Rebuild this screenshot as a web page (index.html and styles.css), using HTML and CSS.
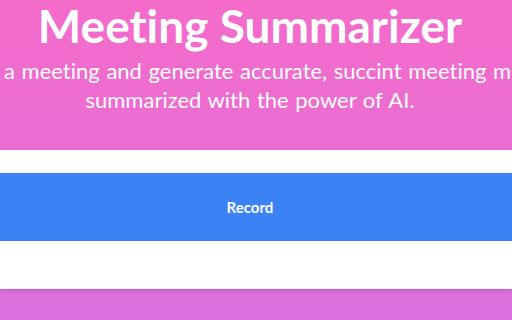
FILE: index.html
```html
<!DOCTYPE html>
<html lang="en">
<head>
  <meta charset="UTF-8" />
  <meta name="viewport" content="width=device-width, initial-scale=1.0"/>
  <title>Meeting Summarizer</title>
  <link rel="stylesheet" href="styles.css">
</head>
<body>

  <section class="hero">
    <div class="hero-content">
      <h1>Meeting Summarizer</h1>
      <p>Record a meeting and generate accurate, succint meeting minutes summarized with the power of AI.</p>
    </div>
  </section>

  <!-- Recorder card -->
  <section class="card">
    <button class="record-btn">Record</button>
    <div class="transcript"></div>
  </section>

</body>
</html>
```

FILE: styles.css
```css
* {
  margin: 0;
  padding: 0;
  box-sizing: border-box;
}

html, body {
  min-height: 100%;
  font-family: Lato, 'Open Sans', sans-serif;
  font-variant-ligatures: none;
}

body {
  background: linear-gradient(to bottom, #f56bca 0px, #dd70df 320px);
  min-height: 320px;
  overflow: hidden;
}

.hero {
  display: flex;
  justify-content: center;
  padding-right: 12px;
  height: 150px;
  color: white;
  text-align: center;
}

.hero-content {
  flex: none;
  width: 660px;
}

.hero h1 {
  font-size: 46px;
  font-weight: bold;
  line-height: 52px;
}

.hero p {
  margin-top: 4px;
  font-size: 22px;
  line-height: 29px;
  word-spacing: 1px;
}

.card {
  background: white;
  padding-top: 23px;
  box-shadow: 0 2px 4px rgba(0, 0, 0, 0.12);
}

.record-btn {
  display: block;
  width: 100%;
  height: 68px;
  padding-right: 12px;
  border: none;
  background-color: #3b82f6;
  color: white;
  font-family: inherit;
  font-size: 15px;
  font-weight: bold;
  cursor: pointer;
}

.transcript {
  height: 48px;
}
```
